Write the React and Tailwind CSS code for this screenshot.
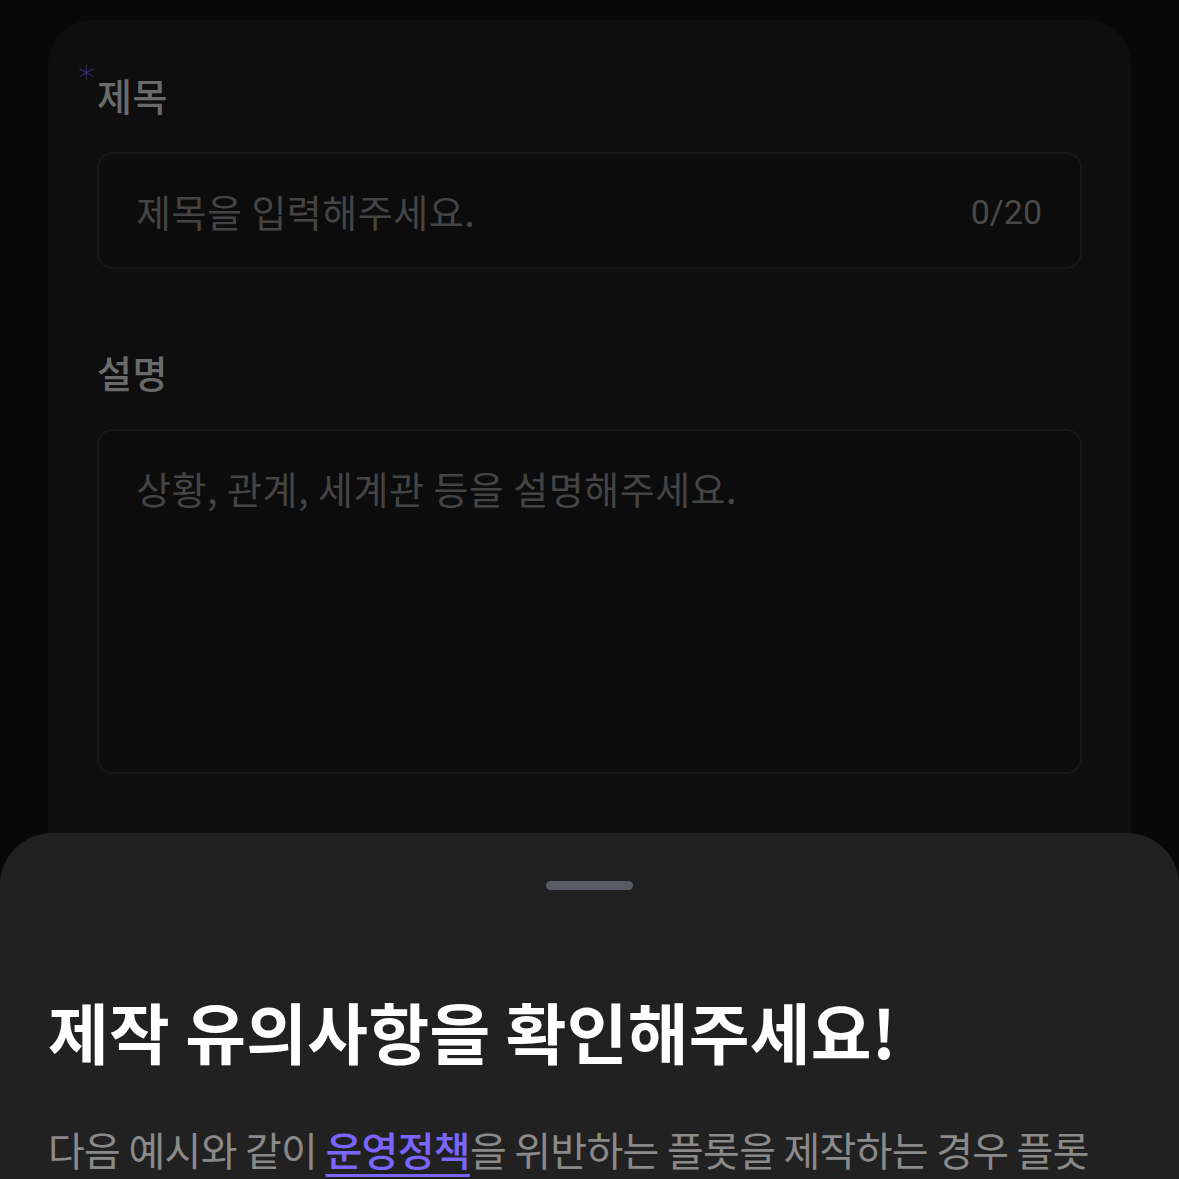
import React from "react";

const font = { fontFamily: '"Noto Sans CJK KR", "Noto Sans", sans-serif' };

export default function App() {
  return (
    <div
      className="relative h-[1179px] w-[1179px] overflow-hidden bg-[#080808]"
      style={font}
    >
      {/* Form card (dimmed behind the sheet) */}
      <div className="mx-[48px] mt-[20px] h-[900px] rounded-[44px] bg-[#0e0e0e] px-[49px] pt-[52px]">
        <div className="relative text-[38px] leading-[46px] font-medium tracking-[0.5px] text-[#6a6a6a]">
          <span
            className="absolute -left-[19px] -top-[14px] text-[34px] leading-[40px] font-light text-[#3c3189]"
            style={{ fontFamily: '"DejaVu Sans", sans-serif' }}
          >
            *
          </span>
          제목
        </div>

        <div className="mt-[34px] flex h-[117px] items-center justify-between rounded-[16px] border-2 border-[#171717] bg-[#0c0c0c] pl-[37px] pr-[38px]">
          <span className="text-[38px] tracking-[0.5px] text-[#444444]">제목을 입력해주세요.</span>
          <span className="pt-[3px] text-[34px] text-[#494949]" style={{ fontFamily: "Roboto, sans-serif" }}>
            0/20
          </span>
        </div>

        <div className="mt-[80px] text-[38px] leading-[46px] font-medium tracking-[0.5px] text-[#6a6a6a]">설명</div>

        <div className="mt-[34px] h-[345px] rounded-[16px] border-2 border-[#171717] bg-[#0c0c0c] pl-[37px] pr-[38px] pt-[28px]">
          <span className="text-[38px] tracking-[0.5px] text-[#444444]">상황, 관계, 세계관 등을 설명해주세요.</span>
        </div>
      </div>

      {/* Bottom sheet */}
      <div className="absolute inset-x-0 top-[833px] h-[400px] rounded-t-[52px] bg-[#212121] px-[48px]">
        <div className="mx-auto mt-[48px] h-[9px] w-[87px] rounded-full bg-[#595b64]" />
        <h2 className="mt-[101px] text-[66px] leading-[78px] font-bold tracking-[0.3px] text-white">
          제작 유의사항을 확인해주세요!
        </h2>
        <p className="mt-[50px] text-[40px] leading-[60px] text-[#8a8a8a] tracking-[-0.7px] whitespace-nowrap">
          다음 예시와 같이{" "}
          <span className="font-medium text-[#7a66ff] underline decoration-[3px] underline-offset-[8px]">
            운영정책
          </span>
          을 위반하는 플롯을 제작하는 경우 플롯
        </p>
      </div>
    </div>
  );
}
